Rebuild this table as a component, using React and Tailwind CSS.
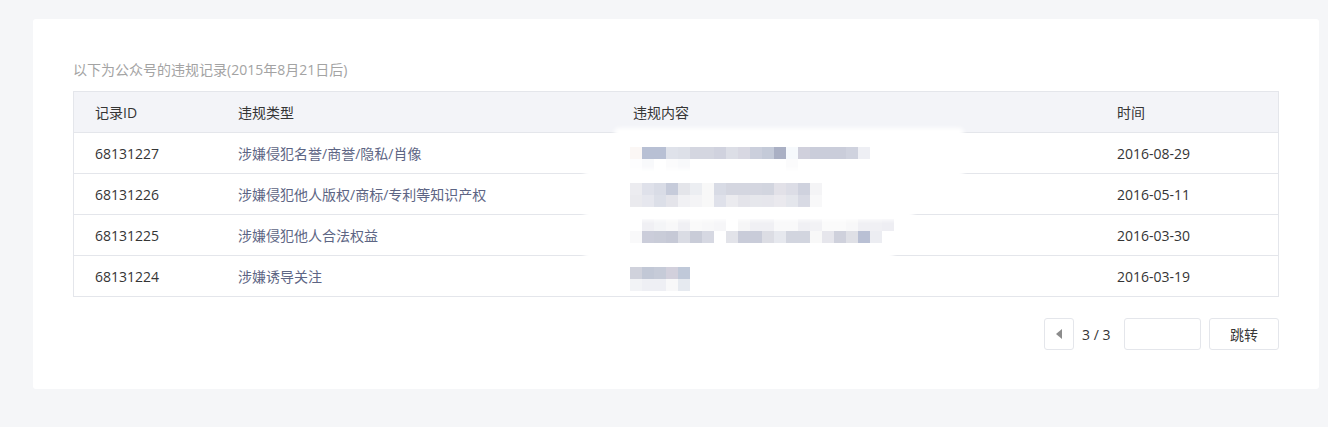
import React from 'react';

const rows = [
  { id: '68131227', type: '涉嫌侵犯名誉/商誉/隐私/肖像', time: '2016-08-29', pad: 'pt-[14px]' },
  { id: '68131226', type: '涉嫌侵犯他人版权/商标/专利等知识产权', time: '2016-05-11', pad: 'pt-[9px]' },
  { id: '68131225', type: '涉嫌侵犯他人合法权益', time: '2016-03-30', pad: 'pt-[4px]' },
  { id: '68131224', type: '涉嫌诱导关注', time: '2016-03-19', pad: 'pt-[11px]' },
];

// mosaic colours of the blurred content, two lines of 12px tiles per row
const mosaic = [
  [
    ['#fbf7f5', '#b8c0d4', '#b8c0d4', '#dfe2ea', '#dde0e8', '#d4d6e0', '#d4d6e0', '#d0d2de', '#dcdee6', '#d8d8e2', '#cbcfdc', '#c4cad8', '#aab0c4', '#f6f9fc', '#d0d0dc', '#cacdda', '#cacdda', '#cacdda', '#cfd2de', '#eeeff4'],
    ['#fdfdfe', '#f8f9fb', '#ffffff', '#fbfbfc', '#f8f9fb', '#ffffff', '#ffffff', '#ffffff', '#ffffff', '#ffffff', '#ffffff', '#ffffff', '#ffffff', '#fbfbfc'],
  ],
  [
    ['#ececf0', '#dfe1ea', '#d9dce6', '#c6cbda', '#e4e5ea', '#eceef2', '#f8f8f8', '#d8dbe5', '#d4d6e0', '#d4d6e0', '#d4d6e0', '#d2d5df', '#e2e1e8', '#dcdde6', '#cfd2de', '#f4f4f6'],
    ['#eaeaee', '#e6e7ee', '#dcdfe8', '#e4e4ea', '#f1f1f4', '#f4f4f6', '#f8f8f8', '#dfe1ea', '#ebebef', '#e4e4ea', '#e6e7ec', '#e6e6ec', '#eae9ee', '#e4e6ec', '#d8dae4', '#f8f8f9'],
  ],
  [
    ['#ffffff', '#f0f0f4', '#f4f5f7', '#f8f8f9', '#f0f0f4', '#fafafa', '#f8f8f9', '#f6f6f8', '#ffffff', '#f6f6f7', '#f0f0f4', '#f0f0f4', '#f9f9fa', '#f9f9fa', '#f0f0f4', '#f2f2f5', '#fbfbfb', '#fbfbfb', '#f8f8f9', '#f0f0f4', '#f0f0f4', '#eeeef3'],
    ['#f9f9fa', '#cbcdda', '#c9ccd8', '#c6c9d6', '#dadce4', '#c9ccd8', '#d6d8e2', '#ffffff', '#e2e3e9', '#c9ccd9', '#c9ccd9', '#dcdde4', '#e6e8ee', '#d2d5df', '#d2d5df', '#f8f8f8', '#e6e6ec', '#cfd1dc', '#dfe0e6', '#b9c0d4', '#ecedf2'],
  ],
  [
    ['#d0d2dc', '#c2c8d6', '#c6cbd8', '#d2d0dc', '#c0c9d9'],
    ['#f2f3f6', '#eeeff4', '#eeeff4', '#f8f8f9', '#e6eaf0'],
  ],
];

function Mosaic({ lines }) {
  return (
    <div className="flex flex-col">
      {lines.map((line, i) => (
        <div key={i} className="flex">
          {line.map((c, j) => (
            <div key={j} className="w-[12px] h-[12px]" style={{ backgroundColor: c }} />
          ))}
        </div>
      ))}
    </div>
  );
}

export default function App() {
  return (
    <div
      className="w-[1328px] h-[427px] bg-[#f5f6f8] pt-[19px] pl-[33px] overflow-hidden"
      style={{ fontFamily: '"Open Sans", "Noto Sans CJK SC", sans-serif' }}
    >
      <div className="w-[1286px] h-[370px] bg-white rounded-[3px] pt-[41px] px-[40px] relative">
        <p className="text-[14px] leading-[20px] text-[#a3a3a3]">以下为公众号的违规记录(2015年8月21日后)</p>

        <div className="mt-[11px] border border-[#e4e6eb] relative">
          <div className="flex h-[41px] items-center bg-[#f3f4f8] text-[14px] text-[#353535] border-b border-[#e4e6eb]">
            <div className="w-[164px] pl-[21px]">记录ID</div>
            <div className="w-[395px]">违规类型</div>
            <div className="w-[484px]">违规内容</div>
            <div>时间</div>
          </div>
          {rows.map((r, i) => (
            <div
              key={r.id}
              className={`flex items-center text-[14px] ${i < rows.length - 1 ? 'h-[41px] border-b border-[#e4e6eb]' : 'h-[40px]'}`}
            >
              <div className="w-[164px] pl-[21px] text-[#353535]">{r.id}</div>
              <div className="w-[395px] text-[#5d6584]">{r.type}</div>
              <div className={`w-[484px] self-stretch ${r.pad}`}>
                <div className="-ml-[3px]">
                  <Mosaic lines={mosaic[i]} />
                </div>
              </div>
              <div className="text-[#353535]">{r.time}</div>
            </div>
          ))}

          {/* white smear left by the blurred region over the row lines */}
          <div className="absolute left-[540px] top-[36px] w-[350px] h-[10px] bg-white blur-[2px] rounded-full" />
          <div className="absolute left-[510px] top-[77px] w-[380px] h-[10px] bg-white blur-[2px] rounded-full" />
          <div className="absolute left-[510px] top-[118px] w-[330px] h-[10px] bg-white blur-[2px] rounded-full" />
          <div className="absolute left-[510px] top-[159px] w-[310px] h-[10px] bg-white blur-[2px] rounded-full" />
        </div>

        <div className="flex justify-end items-center mt-[21px] text-[14px] text-[#353535]">
          <button className="w-[30px] h-[32px] border border-[#e4e6eb] rounded-[3px] flex items-center justify-center bg-white">
            <svg width="6" height="10" viewBox="0 0 6 10">
              <path d="M6 0 L0 5 L6 10 Z" fill="#8c8c8c" />
            </svg>
          </button>
          <span className="ml-[8px] mr-[12px] w-[30px] whitespace-nowrap">3 / 3</span>
          <div className="w-[77px] h-[32px] border border-[#e4e6eb] rounded-[3px] bg-white" />
          <button className="ml-[8px] w-[70px] h-[32px] border border-[#e4e6eb] rounded-[3px] bg-white text-[14px] text-[#353535]">
            跳转
          </button>
        </div>
      </div>
    </div>
  );
}
